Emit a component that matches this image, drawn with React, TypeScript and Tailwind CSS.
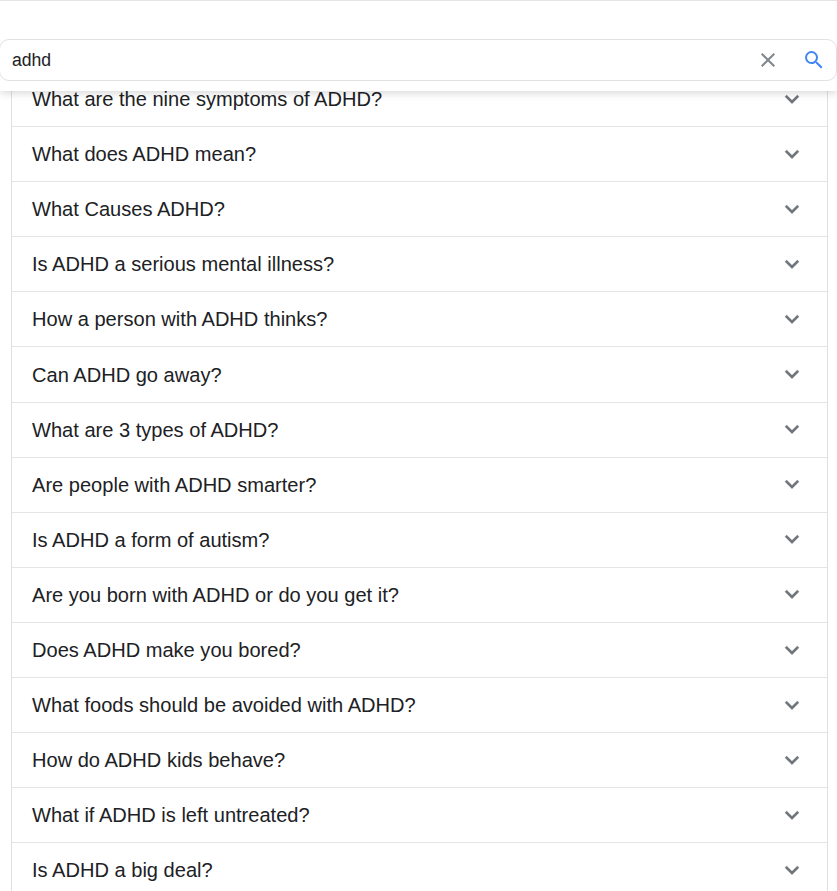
const questions = [
  "What are the nine symptoms of ADHD?",
  "What does ADHD mean?",
  "What Causes ADHD?",
  "Is ADHD a serious mental illness?",
  "How a person with ADHD thinks?",
  "Can ADHD go away?",
  "What are 3 types of ADHD?",
  "Are people with ADHD smarter?",
  "Is ADHD a form of autism?",
  "Are you born with ADHD or do you get it?",
  "Does ADHD make you bored?",
  "What foods should be avoided with ADHD?",
  "How do ADHD kids behave?",
  "What if ADHD is left untreated?",
  "Is ADHD a big deal?",
];

export default function App() {
  return (
    <div className="h-[891px] overflow-hidden bg-white font-['Liberation_Sans',sans-serif] text-[#202124]">
      <header className="relative z-10 h-[91px] border-t border-[#e5e5e5] bg-white pt-[38px] shadow-[0_2px_8px_rgba(0,0,0,0.16)]">
        <div className="-ml-px flex h-[42px] items-center rounded-[10px] border border-[#dfe1e5] pl-3 pr-[10px]">
          <span className="flex-1 text-[17.6px]">adhd</span>
          <svg className="mr-[22px] h-6 w-6 text-[#80868b]" viewBox="0 0 24 24" fill="currentColor">
            <path d="M19 6.41 17.59 5 12 10.59 6.41 5 5 6.41 10.59 12 5 17.59 6.41 19 12 13.41 17.59 19 19 17.59 13.41 12z" />
          </svg>
          <svg className="h-6 w-6 text-[#4285f4]" viewBox="0 0 24 24" fill="currentColor">
            <path d="M15.5 14h-.79l-.28-.27A6.471 6.471 0 0 0 16 9.5 6.5 6.5 0 1 0 9.5 16c1.61 0 3.09-.59 4.23-1.57l.27.28v.79l5 4.99L20.49 19l-4.99-5zm-6 0C7.01 14 5 11.99 5 9.5S7.01 5 9.5 5 14 7.01 14 9.5 11.99 14 9.5 14z" />
          </svg>
        </div>
      </header>
      <ul className="ml-[11px] mr-[9px] -mt-[18.86px] border-x border-[#e0e0e0]">
        {questions.map((q) => (
          <li
            key={q}
            className="flex h-[55.07px] items-center justify-between border-b border-[#e5e5e5] pl-5 pr-[21px] text-[20.07px]"
          >
            <span className="pt-[0.14px]">{q}</span>
            <svg className="mb-[0.6px] h-7 w-7 text-[#70757a]" viewBox="0 0 24 24" fill="currentColor" stroke="currentColor" strokeWidth="0.25">
              <path d="M16.59 8.59 12 13.17 7.41 8.59 6 10l6 6 6-6z" />
            </svg>
          </li>
        ))}
      </ul>
    </div>
  );
}
